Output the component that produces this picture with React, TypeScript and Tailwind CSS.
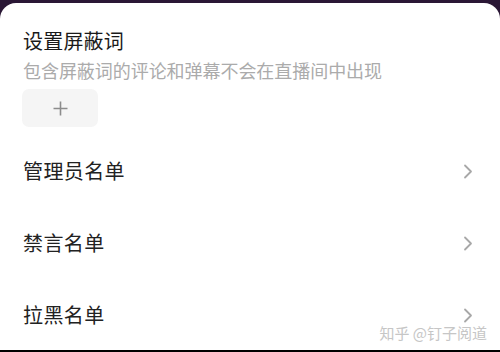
import React from "react";

const font = { fontFamily: '"Noto Sans CJK SC", "Noto Sans", sans-serif' };

function Chevron() {
  return (
    <svg width="10" height="15" viewBox="0 0 10 15" fill="none">
      <path d="M2 1.5 L8 7.5 L2 13.5" stroke="#a8a8a8" strokeWidth="1.8" strokeLinecap="round" strokeLinejoin="round" />
    </svg>
  );
}

function Row({ label }: { label: string }) {
  return (
    <div className="h-[72px] flex items-center justify-between pr-[27px] shrink-0">
      <span className="text-[20px] leading-[28px] text-[#222222] tracking-[0.4px]">{label}</span>
      <Chevron />
    </div>
  );
}

export default function App() {
  return (
    <div className="w-[500px] h-[352px] bg-[#2a1735] pt-[3px] flex flex-col overflow-hidden" style={font}>
      <div className="relative flex-1 bg-white rounded-t-[16px] pl-[23px] flex flex-col overflow-hidden">
        <div className="pt-[24px] text-[20px] leading-[28px] text-[#1a1a1a] tracking-[0.2px]">设置屏蔽词</div>
        <div className="mt-[3px] text-[18px] leading-[24px] text-[#ababab] tracking-[-0.05px]">
          包含屏蔽词的评论和弹幕不会在直播间中出现
        </div>
        <div className="mt-[7px] -ml-[1px] w-[76px] h-[38px] rounded-[7px] bg-[#f5f5f5] flex items-center justify-center shrink-0">
          <svg width="15" height="15" viewBox="0 0 15 15">
            <path d="M7.5 0.5 V14.5 M0.5 7.5 H14.5" stroke="#8c8c8c" strokeWidth="1.6" />
          </svg>
        </div>
        <div className="mt-[8px] flex flex-col">
          <Row label="管理员名单" />
          <Row label="禁言名单" />
          <Row label="拉黑名单" />
        </div>
        <div
          className="absolute right-[13px] top-[320px] text-[15px] leading-[20px] text-[#c6c6c6] whitespace-nowrap"
          style={{ textShadow: "0 0 1px #ffffff" }}
        >
          知乎 @钉子阅道
        </div>
      </div>
      <div className="h-[2px] bg-black shrink-0" />
    </div>
  );
}
